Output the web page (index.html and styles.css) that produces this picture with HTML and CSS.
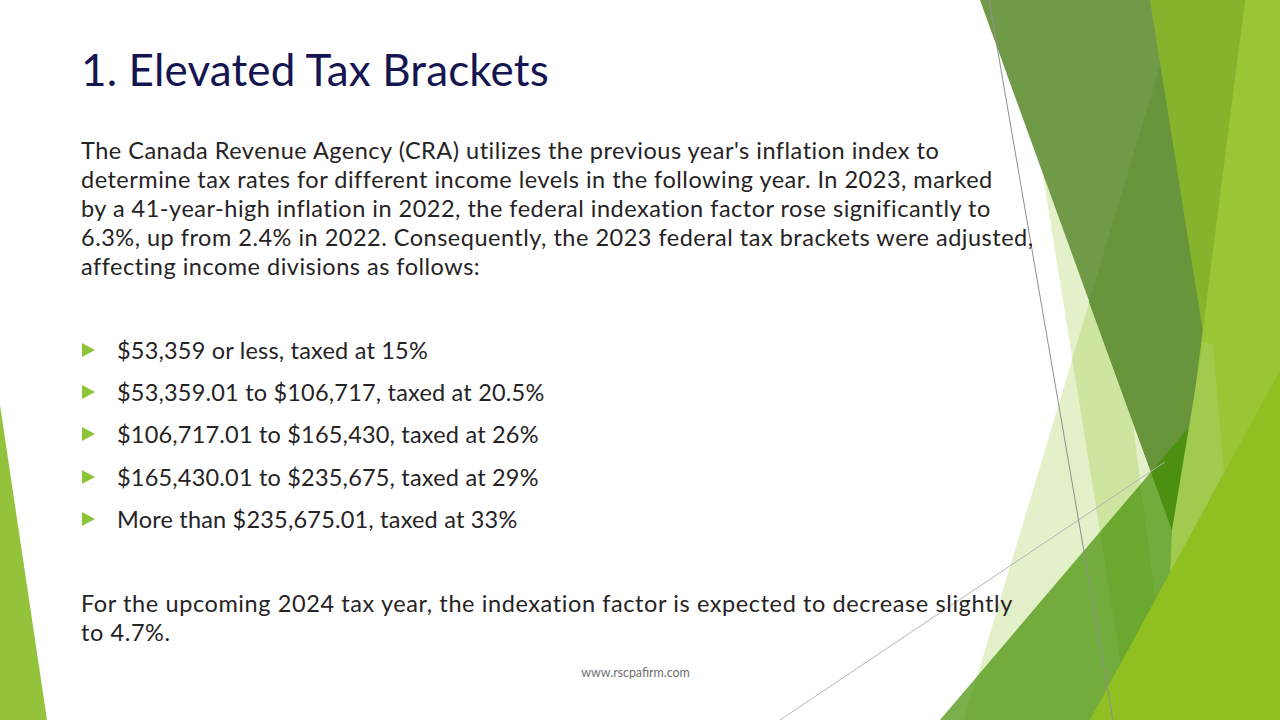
FILE: index.html
```html
<!DOCTYPE html>
<html lang="en">
<head>
<meta charset="utf-8">
<title>1. Elevated Tax Brackets</title>
<link rel="stylesheet" href="styles.css">
</head>
<body>
<div class="slide">
  <svg class="art" viewBox="0 0 1280 720" width="1280" height="720" aria-hidden="true">
    <polygon points="0,405 47,720 0,720" fill="#93c23b"/>
    <polygon points="1015,0 1080,0 1170,720 1130,720" fill="#90c226" fill-opacity="0.25"/>
    <polygon points="1180,0 1200,0 1250,720 964,720" fill="#90c226" fill-opacity="0.25"/>
    <polygon points="980,0 1266,0 1172,530" fill="#709a48"/>
    <polygon points="1180,0 1266,0 1172,530 1089,302" fill="#68943b"/>
    <polygon points="940,720 1190,426 1280,320 1280,720" fill="rgb(64,142,0)" fill-opacity="0.7"/>
    <polygon points="1150,0 1245,0 1205,345" fill="#85b32b"/>
    <polygon points="1245,0 1280,0 1280,720 1153,720" fill="#9ac535"/>
    <polygon points="1203,342 1213,345 1224,472 1170,575 1172,530" fill="#a2ca4f"/>
    <polygon points="1090,720 1280,370 1280,720" fill="#90bf22"/>
    <line x1="989" y1="0" x2="1113" y2="720" stroke="#8f8f8f" stroke-width="1"/>
    <line x1="780" y1="720" x2="1165" y2="462" stroke="#b4b4b4" stroke-width="1"/>
  </svg>
  <main class="content">
    <h1 class="title">1. Elevated Tax Brackets</h1>
    <p class="para">The Canada Revenue Agency (CRA) utilizes the previous year's inflation index to<br>determine tax rates for different income levels in the following year. In 2023, marked<br>by a 41-year-high inflation in 2022, the federal indexation factor rose significantly to<br>6.3%, up from 2.4% in 2022. Consequently, the 2023 federal tax brackets were adjusted,<br>affecting income divisions as follows:</p>
    <ul class="brackets">
      <li>$53,359 or less, taxed at 15%</li>
      <li>$53,359.01 to $106,717, taxed at 20.5%</li>
      <li>$106,717.01 to $165,430, taxed at 26%</li>
      <li>$165,430.01 to $235,675, taxed at 29%</li>
      <li>More than $235,675.01, taxed at 33%</li>
    </ul>
    <p class="para note">For the upcoming 2024 tax year, the indexation factor is expected to decrease slightly<br>to 4.7%.</p>
  </main>
  <footer class="footer">www.rscpafirm.com</footer>
</div>
</body>
</html>
```
FILE: styles.css
```css
* { box-sizing: border-box; }
html, body { margin: 0; padding: 0; background: #ffffff; }
.slide {
  position: relative;
  width: 1280px;
  height: 720px;
  overflow: hidden;
  background: #ffffff;
  display: flex;
  flex-direction: column;
  font-family: "Lato", "Open Sans", sans-serif;
}
.art {
  position: absolute;
  left: 0;
  top: 0;
  z-index: 0;
}
.content {
  position: relative;
  z-index: 1;
  padding: 43px 0 0 81px;
  display: flex;
  flex-direction: column;
}
.title {
  margin: 0;
  font-size: 44px;
  line-height: 1.2;
  font-weight: 400;
  letter-spacing: 0.15px;
  color: #151551;
}
.para {
  margin: 40px 0 0 0;
  font-size: 23.5px;
  line-height: 29px;
  letter-spacing: 0.5px;
  color: #262324;
  white-space: nowrap;
}
.brackets {
  list-style: none;
  margin: 48px 0 0 0;
  padding: 0;
  display: flex;
  flex-direction: column;
}
.brackets li {
  position: relative;
  padding-left: 36px;
  font-size: 23.5px;
  line-height: 42.25px;
  letter-spacing: 0.2px;
  color: #262324;
  white-space: nowrap;
}
.brackets li::before {
  content: "";
  position: absolute;
  left: 1px;
  top: 14px;
  width: 0;
  height: 0;
  border-top: 7px solid transparent;
  border-bottom: 7px solid transparent;
  border-left: 13px solid #8cc43a;
}
.para.note { margin-top: 49px; letter-spacing: 0.6px; }
.footer {
  position: relative;
  z-index: 1;
  margin-top: 19px;
  padding-right: 9px;
  text-align: center;
  font-size: 12.4px;
  line-height: 14px;
  color: #6e6e6e;
}
```
